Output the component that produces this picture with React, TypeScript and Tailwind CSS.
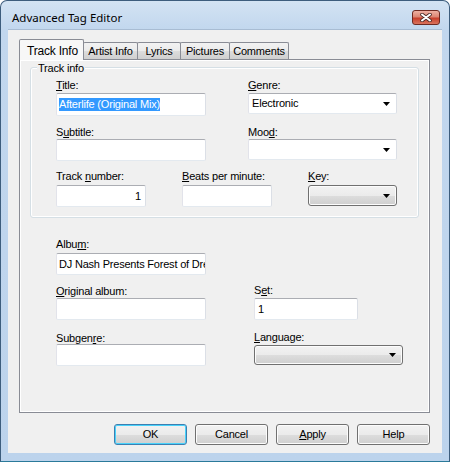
import React from 'react';

type AccProps = { text: string; u: number; colon?: boolean };

function Acc({ text, u, colon = true }: AccProps) {
  return (
    <>
      {text.slice(0, u)}
      <span className="underline underline-offset-[1px] decoration-1">{text[u]}</span>
      {text.slice(u + 1)}
      {colon && ':'}
    </>
  );
}

function Label({ text, u }: { text: string; u: number }) {
  return (
    <div className="h-[13px] leading-[16px] whitespace-nowrap">
      <Acc text={text} u={u} />
    </div>
  );
}

function Arrow() {
  return (
    <svg width="7" height="4" viewBox="0 0 7 4" className="shrink-0">
      <path d="M0 0h7L3.5 4z" fill="#000" />
    </svg>
  );
}

const boxBorder =
  'border border-[#abadb3] border-l-[#e2e3ea] border-r-[#dbdfe6] border-b-[#e3e9ef] rounded-[2px] bg-white';

function TextBox({ h = 'h-[22px]', className = '', children }: { h?: string; className?: string; children?: React.ReactNode }) {
  return (
    <div className={`${boxBorder} ${h} flex items-center px-[2px] overflow-hidden whitespace-nowrap ${className}`}>
      {children}
    </div>
  );
}

function Combo({ value }: { value?: string }) {
  return (
    <div className={`${boxBorder} h-[21px] flex items-center justify-between pl-[3px] pr-[6px]`}>
      <span>{value}</span>
      <Arrow />
    </div>
  );
}

const btnFace =
  'bg-[linear-gradient(to_bottom,#f2f2f2_0%,#ebebeb_50%,#dddddd_51%,#cfcfcf_100%)] border border-[#707070] rounded-[3px] shadow-[inset_0_0_0_1px_#fcfcfc]';

function ButtonCombo({ h = 'h-[21px]' }: { h?: string }) {
  return (
    <div className={`${btnFace} ${h} flex items-center justify-end pr-[6px]`}>
      <Arrow />
    </div>
  );
}

function PushButton({ children, def = false }: { children: React.ReactNode; def?: boolean }) {
  return (
    <div
      className={`w-[73px] h-[21px] flex items-center justify-center rounded-[3px] border ${
        def
          ? 'border-[#3c7fb1] bg-[linear-gradient(to_bottom,#f2f2f2_0%,#ebebeb_50%,#dddddd_51%,#cfcfcf_100%)] shadow-[inset_0_0_0_1px_#48d2fb]'
          : btnFace
      }`}
    >
      {children}
    </div>
  );
}

const tabs = [
  { name: 'Artist Info', w: 'w-[55px]' },
  { name: 'Lyrics', w: 'w-[44px]' },
  { name: 'Pictures', w: 'w-[50px]' },
  { name: 'Comments', w: 'w-[60px]' },
];

export default function App() {
  return (
    <div className="w-[450px] h-[462px] flex flex-col rounded-t-[7px] border border-[#3d5d7d] border-b-[#2b7a9a] bg-[linear-gradient(to_bottom,#d3e3f3_0px,#c2d7ee_28px,#bcd3ec_100%)] text-[11px] tracking-[-0.2px] text-black font-['Liberation_Sans',Arial,sans-serif] overflow-hidden">
      {/* title bar */}
      <div className="h-[28px] shrink-0 flex items-center justify-between pl-[11px] pr-[9px] pt-[5px]">
        <span className="text-[11.5px] tracking-normal font-['Noto_Sans','Open_Sans',sans-serif] leading-none">Advanced Tag Editor</span>
        <div className="w-[28px] h-[15px] -mt-[1px] rounded-[3px] border border-[#6e2a22] bg-[linear-gradient(to_bottom,#eeb1a3_0%,#dc8674_45%,#c73f2c_55%,#d9735d_100%)] flex items-center justify-center">
          <svg width="12" height="9" viewBox="0 0 12 9">
            <path d="M2 1.5L10 7.5M10 1.5L2 7.5" stroke="#4a2a26" strokeWidth="3.6" strokeLinecap="round" />
            <path d="M2 1.5L10 7.5M10 1.5L2 7.5" stroke="#fff" strokeWidth="2" strokeLinecap="round" />
          </svg>
        </div>
      </div>

      {/* client area */}
      <div className="mx-[7px] h-[424px] shrink-0 bg-[#f0f0f0] flex flex-col pt-[9px] pl-[11px] pr-[12px] border-t border-[#a8bcd3]">
        {/* tabs */}
        <div className="h-[20px] flex items-end relative z-10">
          <div className="w-[65px] h-[21px] -mb-px border border-b-0 border-[#898c95] rounded-t-[2px] bg-[#f7f7f7] flex items-start pt-[2px] pl-[7px] text-[12px]">
            Track Info
          </div>
          {tabs.map((t) => (
            <div
              key={t.name}
              className={`${t.w} h-[17px] -ml-px border border-b-0 border-[#898c95] rounded-t-[2px] bg-[linear-gradient(to_bottom,#f2f2f2_0%,#ebebeb_50%,#dddddd_51%,#cfcfcf_100%)] flex items-center justify-center pt-[1px]`}
            >
              {t.name}
            </div>
          ))}
        </div>

        {/* tab page */}
        <div className="w-[411px] h-[354px] border border-[#898c95] bg-[#f0f0f0] shadow-[inset_0_0_0_1px_#ffffff] flex flex-col">
          {/* group box */}
          <div className="relative mt-[7px] ml-[10px] w-[389px] h-[151px] border border-[#d5dfe5] rounded-[3px] shadow-[inset_0_0_0_1px_#ffffff] pt-[9px] pl-[25px]">
            <span className="absolute -top-[7px] left-[6px] px-[1px] bg-[#f0f0f0] leading-[14px]">Track info</span>

            <div className="flex">
              <div className="w-[150px]">
                <Label text="Title" u={0} />
                <TextBox h="h-[23px]" className="mt-[3px] border-[#7eb4ea] border-l-[#b7d4f1] border-r-[#b7d4f1] border-b-[#c7e2f1]">
                  <span className="bg-[#3399ff] text-white leading-[13px]">Afterlife (Original Mix)</span>
                </TextBox>
              </div>
              <div className="w-[149px] ml-[42px]">
                <Label text="Genre" u={0} />
                <div className="mt-[3px]">
                  <Combo value="Electronic" />
                </div>
              </div>
            </div>

            <div className="flex mt-[8px]">
              <div className="w-[150px]">
                <Label text="Subtitle" u={1} />
                <TextBox className="mt-[2px]" />
              </div>
              <div className="w-[149px] ml-[42px]">
                <Label text="Mood" u={3} />
                <div className="mt-[2px]">
                  <Combo />
                </div>
              </div>
            </div>

            <div className="flex mt-[7px]">
              <div className="w-[90px]">
                <Label text="Track number" u={6} />
                <TextBox className="mt-[4px] justify-end pr-[4px]">1</TextBox>
              </div>
              <div className="w-[90px] ml-[36px]">
                <Label text="Beats per minute" u={0} />
                <TextBox className="mt-[4px]" />
              </div>
              <div className="w-[89px] ml-[36px]">
                <Label text="Key" u={0} />
                <div className="mt-[4px]">
                  <ButtonCombo />
                </div>
              </div>
            </div>
          </div>

          {/* lower fields */}
          <div className="mt-[18px] pl-[36px] grid grid-cols-[150px_149px] gap-x-[48px]">
            <div>
              <Label text="Album" u={4} />
              <TextBox className="mt-[4px] pl-[2px]">DJ Nash Presents Forest of Dreams</TextBox>
            </div>
            <div />

            <div className="mt-[8px]">
              <Label text="Original album" u={0} />
              <TextBox className="mt-[2px]" />
            </div>
            <div className="mt-[7px]">
              <Label text="Set" u={1} />
              <TextBox className="mt-[3px] w-[104px] pl-[3px]">1</TextBox>
            </div>

            <div className="mt-[10px]">
              <Label text="Subgenre" u={6} />
              <TextBox className="mt-[1px]" />
            </div>
            <div className="mt-[9px]">
              <Label text="Language" u={0} />
              <div className="mt-[3px]">
                <ButtonCombo h="h-[20px]" />
              </div>
            </div>
          </div>
        </div>

        {/* buttons */}
        <div className="mt-[11px] flex justify-end gap-[8px]">
          <PushButton def>OK</PushButton>
          <PushButton>Cancel</PushButton>
          <PushButton>
            <Acc text="Apply" u={0} colon={false} />
          </PushButton>
          <PushButton>Help</PushButton>
        </div>
      </div>
    </div>
  );
}
